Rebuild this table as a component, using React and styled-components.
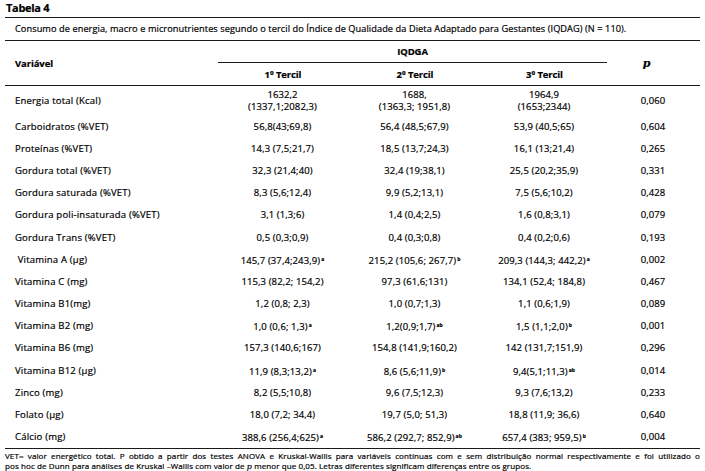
import React from 'react';
import styled, { createGlobalStyle } from 'styled-components';

const GlobalStyle = createGlobalStyle`
    html, body {
        margin: 0;
        padding: 0;
        background: #ffffff;
    }
    body {
        font-family: "Open Sans", "Noto Sans", sans-serif;
        color: #000000;
    }
`;

const rows = [
    { label: 'Carboidratos (%VET)', t1: '56,8(43;69,8)', t2: '56,4 (48,5;67,9)', t3: '53,9 (40,5;65)', p: '0,604' },
    { label: 'Proteínas (%VET)', t1: '14,3 (7,5;21,7)', t2: '18,5 (13,7;24,3)', t3: '16,1 (13;21,4)', p: '0,265' },
    { label: 'Gordura total (%VET)', t1: '32,3 (21,4;40)', t2: '32,4 (19;38,1)', t3: '25,5 (20,2;35,9)', p: '0,331' },
    { label: 'Gordura saturada (%VET)', t1: '8,3 (5,6;12,4)', t2: '9,9 (5,2;13,1)', t3: '7,5 (5,6;10,2)', p: '0,428' },
    { label: 'Gordura poli-insaturada (%VET)', t1: '3,1 (1,3;6)', t2: '1,4 (0,4;2,5)', t3: '1,6 (0,8;3,1)', p: '0,079' },
    { label: 'Gordura Trans (%VET)', t1: '0,5 (0,3;0,9)', t2: '0,4 (0,3;0,8)', t3: '0,4 (0,2;0,6)', p: '0,193' },
    { label: '\u00a0Vitamina A (µg)', t1: ['145,7 (37,4;243,9)', 'a'], t2: ['215,2 (105,6; 267,7)', 'b'], t3: ['209,3 (144,3; 442,2)', 'a'], p: '0,002' },
    { label: 'Vitamina C (mg)', t1: '115,3 (82,2; 154,2)', t2: '97,3 (61,6;131)', t3: '134,1 (52,4; 184,8)', p: '0,467' },
    { label: 'Vitamina B1(mg)', t1: '1,2 (0,8; 2,3)', t2: '1,0 (0,7;1,3)', t3: '1,1 (0,6;1,9)', p: '0,089' },
    { label: 'Vitamina B2 (mg)', t1: ['1,0 (0,6; 1,3)', 'a'], t2: ['1,2(0,9;1,7)', 'ab'], t3: ['1,5 (1,1;2,0)', 'b'], p: '0,001' },
    { label: 'Vitamina B6 (mg)', t1: '157,3 (140,6;167)', t2: '154,8 (141,9;160,2)', t3: '142 (131,7;151,9)', p: '0,296' },
    { label: 'Vitamina B12 (µg)', t1: ['11,9 (8,3;13,2)', 'a'], t2: ['8,6 (5,6;11,9)', 'b'], t3: ['9,4(5,1;11,3)', 'ab'], p: '0,014' },
    { label: 'Zinco (mg)', t1: '8,2 (5,5;10,8)', t2: '9,6 (7,5;12,3)', t3: '9,3 (7,6;13,2)', p: '0,233' },
    { label: 'Folato (µg)', t1: '18,0 (7,2; 34,4)', t2: '19,7 (5,0; 51,3)', t3: '18,8 (11,9; 36,6)', p: '0,640' },
    { label: 'Cálcio (mg)', t1: ['388,6 (256,4;625)', 'a'], t2: ['586,2 (292,7; 852,9)', 'ab'], t3: ['657,4 (383; 959,5)', 'b'], p: '0,004' },
];

const Page = styled.div`
    width: 695px;
    padding: 1px 0 0 5px;
    -webkit-text-stroke: 0.2px #000;
`;

const Title = styled.div`
    font-size: 11px;
    font-weight: 700;
    line-height: 14px;
    padding-left: 1px;
    height: 16px;
    border-bottom: 1px solid #1a1a1a;
    letter-spacing: -0.3px;
`;

const Caption = styled.div`
    font-size: 9.2px;
    line-height: 22px;
    padding-left: 10px;
    border-bottom: 1px solid #1a1a1a;
    letter-spacing: 0.08px;
`;

const Table = styled.table`
    width: 100%;
    border-collapse: collapse;
    font-size: 9.5px;
    table-layout: fixed;
`;

const Th = styled.th`
    font-weight: 700;
    text-align: ${p => (p.$left ? 'left' : 'center')};
    padding: 0 ${p => p.$pr || '0'} 0 ${p => (p.$left ? '10px' : '0')};
    height: ${p => p.$h || '22px'};
    border-bottom: ${p => (p.$line ? '1px solid #1a1a1a' : 'none')};
    vertical-align: middle;
    letter-spacing: -0.1px;
`;

const GroupTh = styled(Th)`
    height: 21px;
`;

const PHead = styled.span`
    font-family: "DejaVu Serif", serif;
    font-style: italic;
    font-size: 11px;
    font-weight: 700;
`;

const Tr = styled.tr`
    height: ${p => p.$h || '22.2px'};
    &:last-child td {
        border-bottom: 1px solid #1a1a1a;
    }
`;

const Td = styled.td`
    text-align: ${p => (p.$left ? 'left' : 'center')};
    padding-left: ${p => (p.$left ? '10px' : '0')};
    vertical-align: middle;
    line-height: 12px;
    white-space: nowrap;
    letter-spacing: ${p => (p.$left ? '0.2px' : '0.1px')};
`;

const Sup = styled.sup`
    font-size: 5px;
    font-weight: 700;
    vertical-align: 3px;
    margin-left: 1px;
`;

const Footnote = styled.div`
    font-size: 8px;
    line-height: 10.5px;
    padding-top: 2px;
    letter-spacing: 0.1px;
`;

const FootLine = styled.div`
    white-space: nowrap;
    text-align: ${p => (p.$justify ? 'justify' : 'left')};
    text-align-last: ${p => (p.$justify ? 'justify' : 'left')};
`;

const PItalic = styled.span`
    font-family: "DejaVu Serif", serif;
    font-style: italic;
`;

const Cell = ({ v }) =>
    Array.isArray(v) ? (
        <>
            {v[0]}
            <Sup>{v[1]}</Sup>
        </>
    ) : (
        v
    );

export default function App() {
    return (
        <Page>
            <GlobalStyle />
            <Title>Tabela 4</Title>
            <Caption>
                Consumo de energia, macro e micronutrientes segundo o tercil do Índice de Qualidade da Dieta Adaptado para Gestantes (IQDAG) (N = 110).
            </Caption>
            <Table>
                <colgroup>
                    <col style={{ width: '213px' }} />
                    <col style={{ width: '130px' }} />
                    <col style={{ width: '134px' }} />
                    <col style={{ width: '125px' }} />
                    <col style={{ width: '93px' }} />
                </colgroup>
                <thead>
                    <tr>
                        <Th $left rowSpan={2} $line $h="43px">Variável</Th>
                        <GroupTh colSpan={3} $line>IQDGA</GroupTh>
                        <Th rowSpan={2} $line $pr="14px"><PHead>p</PHead></Th>
                    </tr>
                    <tr>
                        <Th $line>1º Tercil</Th>
                        <Th $line>2º Tercil</Th>
                        <Th $line>3º Tercil</Th>
                    </tr>
                </thead>
                <tbody>
                    <Tr $h="30px">
                        <Td $left>Energia total (Kcal)</Td>
                        <Td>1632,2<br />(1337,1;2082,3)</Td>
                        <Td>1688,<br />(1363,3; 1951,8)</Td>
                        <Td>1964,9<br />(1653;2344)</Td>
                        <Td>0,060</Td>
                    </Tr>
                    {rows.map(r => (
                        <Tr key={r.label}>
                            <Td $left>{r.label}</Td>
                            <Td><Cell v={r.t1} /></Td>
                            <Td><Cell v={r.t2} /></Td>
                            <Td><Cell v={r.t3} /></Td>
                            <Td>{r.p}</Td>
                        </Tr>
                    ))}
                </tbody>
            </Table>
            <Footnote>
                <FootLine $justify>
                    VET= valor energético total. P obtido a partir dos testes ANOVA e Kruskal-Wallis para variáveis contínuas com e sem distribuição normal respectivamente e foi utilizado o
                </FootLine>
                <FootLine>
                    pos hoc de Dunn para análises de Kruskal –Wallis com valor de <PItalic>p</PItalic> menor que 0,05. Letras diferentes significam diferenças entre os grupos.
                </FootLine>
            </Footnote>
        </Page>
    );
}
